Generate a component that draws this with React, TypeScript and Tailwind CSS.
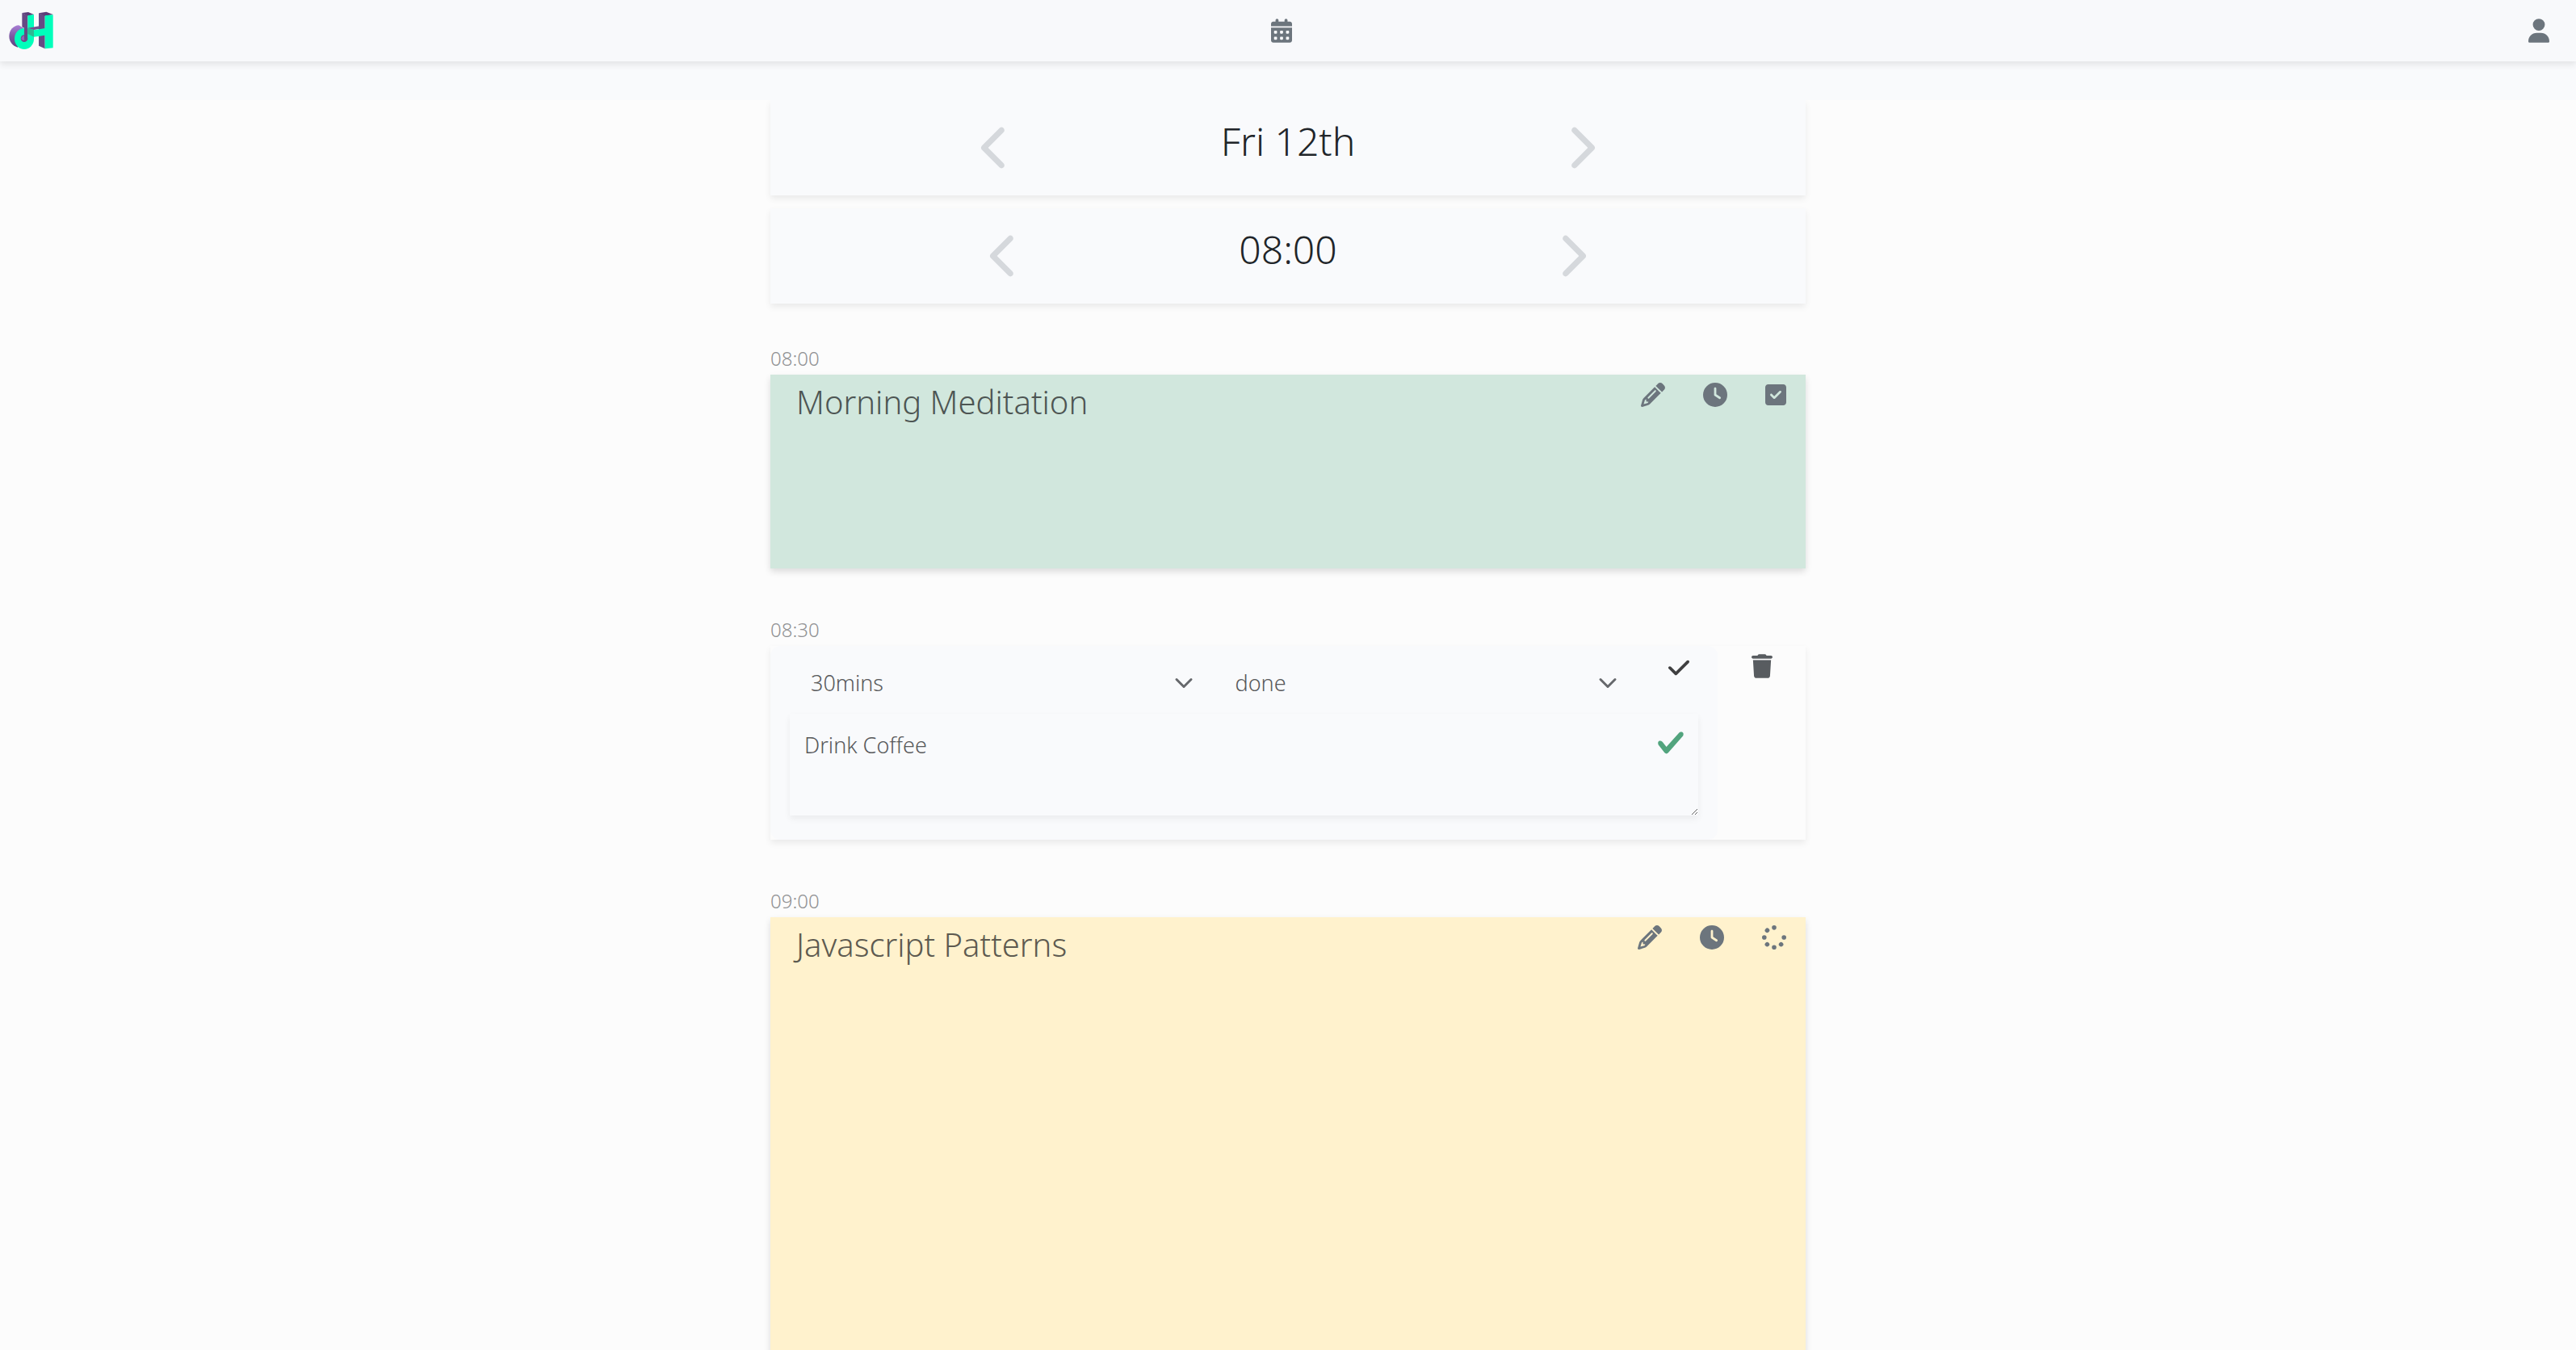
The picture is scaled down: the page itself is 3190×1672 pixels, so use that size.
import type { ReactNode } from "react";
import {
  FaCalendarDays,
  FaCheck,
  FaChevronLeft,
  FaChevronRight,
  FaClock,
  FaPencil,
  FaSpinner,
  FaSquareCheck,
  FaTrash,
  FaUser,
} from "react-icons/fa6";

function Logo() {
  return (
    <svg viewBox="30 44 171 144" className="h-12 w-[57px]" aria-hidden="true">
      <defs>
        <linearGradient id="bowl" x1="0" y1="0" x2="0" y2="1">
          <stop offset="0" stopColor="#a97fd6" />
          <stop offset="0.5" stopColor="#7b58a0" />
          <stop offset="1" stopColor="#5f467f" />
        </linearGradient>
      </defs>
      <path d="M34 136C34 114 50 97 70 96L88 107L66 178C46 172 34 156 34 136Z" fill="url(#bowl)" />
      <ellipse cx="90" cy="146" rx="36" ry="39" fill="#00ffbb" />
      <ellipse cx="90" cy="145" rx="13" ry="13" fill="#6a4b86" />
      <path d="M79 146C80 139 86 134 92 135L91 150C88 153 82 152 79 146Z" fill="#8e68b4" />
      <path d="M82 50L103 60V140L90 148V106L82 102Z" fill="#664b84" />
      <path d="M82 50L105 47L126 56L103 61Z" fill="#5b3f78" />
      <path d="M103 60L126 56V150L103 140Z" fill="#00ffbb" />
      <path d="M103 106L146 99L167 106L126 113Z" fill="#73538f" />
      <path d="M103 106L126 114V139L103 128Z" fill="#2fb794" />
      <path d="M144 51L167 60V183L144 172Z" fill="#664b84" />
      <path d="M144 51L172 46L197 56L167 62Z" fill="#5b3f78" />
      <path d="M126 114L167 107V60L197 57V180L167 183V133L126 139Z" fill="#00ffbb" />
    </svg>
  );
}

function NavBar() {
  return (
    <header className="relative">
      <nav className="relative z-10 flex h-[76px] items-center justify-between bg-[#f8f9fb] text-[#6c757d] shadow-[0_4px_8px_rgba(0,0,0,0.09)]">
        <a href="#home" aria-label="Home" className="w-[76px] pl-2.5">
          <Logo />
        </a>
        <button type="button" aria-label="Calendar">
          <FaCalendarDays className="h-[30px] w-[26px]" />
        </button>
        <button type="button" aria-label="Account" className="px-[33px]">
          <FaUser className="h-[30px] w-[26px]" />
        </button>
      </nav>
      <div className="h-12 bg-[#f9fafc]" />
    </header>
  );
}

function Stepper({ value, name }: { value: string; name: string }) {
  return (
    <section className="flex h-[118px] items-center justify-evenly bg-[#f9fafc] shadow-[0_4px_8px_rgba(0,0,0,0.075)]">
      <button type="button" aria-label={`Previous ${name}`} className="text-[#d5d8dc]">
        <FaChevronLeft className="size-[58px]" />
      </button>
      <h2 className="pb-4 text-[48px] leading-[60px] text-[#212529]">{value}</h2>
      <button type="button" aria-label={`Next ${name}`} className="text-[#d5d8dc]">
        <FaChevronRight className="size-[58px]" />
      </button>
    </section>
  );
}

function Slot({ time, children }: { time: string; children: ReactNode }) {
  return (
    <li>
      <time className="mb-1 block text-[24px] leading-8 text-[#909193]">{time}</time>
      {children}
    </li>
  );
}

function TaskCard({
  title,
  cardClass,
  status,
}: {
  title: string;
  cardClass: string;
  status: ReactNode;
}) {
  return (
    <article className={`flex items-start justify-between pr-6 pl-8 shadow-[0_4px_8px_rgba(0,0,0,0.13)] ${cardClass}`}>
      <h3 className="pt-2.5 text-[40px] leading-[48px]">{title}</h3>
      <div className="flex gap-[47px] pt-2.5 text-[#6c757d]">
        <button type="button" aria-label="Edit">
          <FaPencil className="size-[30px]" />
        </button>
        <button type="button" aria-label="Duration">
          <FaClock className="size-[30px]" />
        </button>
        <button type="button" aria-label="Status">
          {status}
        </button>
      </div>
    </article>
  );
}

function Select({ label, options }: { label: string; options: string[] }) {
  return (
    <div className="relative mt-2 flex-1">
      <select
        aria-label={label}
        className="h-[76px] w-full appearance-none bg-transparent px-[26px] text-[27px] text-[#58595b]"
      >
        {options.map((option) => (
          <option key={option}>{option}</option>
        ))}
      </select>
      <svg
        viewBox="0 0 16 16"
        className="pointer-events-none absolute top-[26px] right-[26px] size-6"
        fill="none"
        stroke="#66686c"
        strokeWidth="2"
        strokeLinecap="round"
        strokeLinejoin="round"
        aria-hidden="true"
      >
        <path d="m2 5 6 6 6-6" />
      </svg>
    </div>
  );
}

function EditCard() {
  return (
    <form className="flex h-60 bg-[#fcfcfc] shadow-[0_4px_8px_rgba(0,0,0,0.075)]">
      <div className="flex-1 rounded-xl bg-[#f9fafc] px-6">
        <div className="flex items-start">
          <Select label="Duration" options={["30mins", "60mins", "90mins"]} />
          <Select label="Status" options={["done", "doing", "todo"]} />
          <button
            type="button"
            aria-label="Save"
            className="flex h-[54px] w-[74px] items-center justify-end pr-[11px] text-[#3f3f40]"
          >
            <FaCheck className="h-[30px] w-[26px]" />
          </button>
        </div>
        <div className="relative">
          <textarea
            aria-label="Task"
            defaultValue="Drink Coffee"
            className="block h-[126px] w-full resize bg-[#f9fafc] px-[18px] pt-[18px] text-[27px] leading-[42px] text-[#58595b] shadow-[0_4px_8px_rgba(0,0,0,0.06)]"
          />
          <svg
            viewBox="0 0 8 8"
            className="pointer-events-none absolute top-[18px] right-4 size-9"
            fill="#52a47e"
            aria-hidden="true"
          >
            <path d="M2.3 6.73.6 4.53c-.4-1.04.46-1.4 1.1-.8l1.1 1.4 3.4-3.8c.6-.63 1.6-.27 1.2.7l-4 4.6c-.43.5-.8.4-1.1.1z" />
          </svg>
        </div>
      </div>
      <div className="flex w-[109px] items-start justify-center pt-2.5 text-[#585c60]">
        <button type="button" aria-label="Delete">
          <FaTrash className="h-[30px] w-[26px]" />
        </button>
      </div>
    </form>
  );
}

export default function App() {
  return (
    <div className="h-screen overflow-hidden bg-[#fcfcfc] font-['Noto_Sans',sans-serif] font-[350]">
      <NavBar />
      <main className="mx-auto max-w-[1282px]">
        <div className="flex flex-col gap-4">
          <Stepper value="Fri 12th" name="day" />
          <Stepper value="08:00" name="time" />
        </div>
        <ol className="mt-[52px] flex flex-col gap-[60px]">
          <Slot time="08:00">
            <TaskCard
              title="Morning Meditation"
              cardClass="h-60 bg-[#d1e7dd] text-[#4d5553]"
              status={<FaSquareCheck className="h-[30px] w-[26px]" />}
            />
          </Slot>
          <Slot time="08:30">
            <EditCard />
          </Slot>
          <Slot time="09:00">
            <TaskCard
              title="Javascript Patterns"
              cardClass="h-[720px] bg-[#fff2cd] text-[#5d5a50]"
              status={<FaSpinner className="size-[30px]" />}
            />
          </Slot>
        </ol>
      </main>
    </div>
  );
}
